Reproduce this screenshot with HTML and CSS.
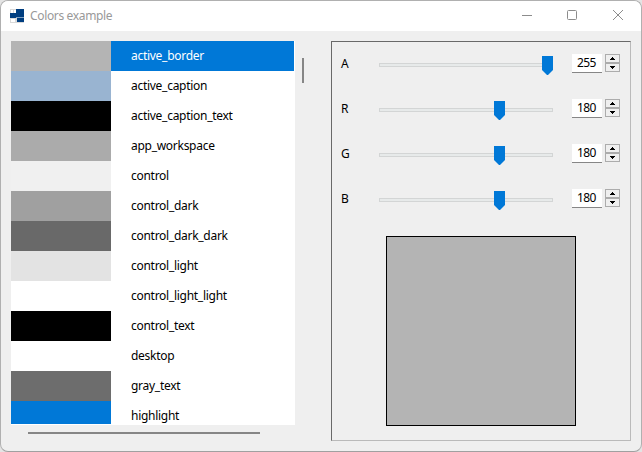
FILE: index.html
```html
<!DOCTYPE html>
<html lang="en">
<head>
<meta charset="utf-8">
<title>Colors example</title>
<link rel="stylesheet" href="styles.css">
</head>
<body>
<div class="window">
  <header class="titlebar">
    <svg class="logo" width="14" height="14" viewBox="0 0 14 14" shape-rendering="crispEdges"><path fill="#d9d9d9" d="M0 0h14v14H0z"/><path fill="#fff" d="M1 1h2v3H1zM4 1h2v3H4zM1 10h4v3H1z"/><path fill="#003e80" d="M6 0h8v8H6zM0 4h6v5H0zM7 9h7v4H7z"/><path fill="#7f9fc0" d="M6 8h8v1H6z"/></svg>
    <h1 class="title">Colors example</h1>
    <svg class="controls" width="104" height="12" viewBox="0 0 104 12" fill="none" stroke="#8c8c8c"><path d="M0 6.500h10M91 1l10 10M101 1L91 11"/><rect x="45.500" y="1.500" width="9" height="9" rx="1"/></svg>
  </header>
  <main class="content">
    <section class="list-area">
      <div class="list-row">
        <ul class="list">
          <li class="item selected"><i class="swatch active-border"></i><span>active_border</span></li>
          <li class="item"><i class="swatch active-caption"></i><span>active_caption</span></li>
          <li class="item"><i class="swatch black"></i><span>active_caption_text</span></li>
          <li class="item"><i class="swatch app-workspace"></i><span>app_workspace</span></li>
          <li class="item"><i class="swatch control"></i><span>control</span></li>
          <li class="item"><i class="swatch control-dark"></i><span>control_dark</span></li>
          <li class="item"><i class="swatch control-dark-dark"></i><span>control_dark_dark</span></li>
          <li class="item"><i class="swatch control-light"></i><span>control_light</span></li>
          <li class="item"><i class="swatch white"></i><span>control_light_light</span></li>
          <li class="item"><i class="swatch black"></i><span>control_text</span></li>
          <li class="item"><i class="swatch white"></i><span>desktop</span></li>
          <li class="item"><i class="swatch gray-text"></i><span>gray_text</span></li>
          <li class="item"><i class="swatch highlight"></i><span>highlight</span></li>
        </ul>
        <div class="vscroll"></div>
      </div>
      <div class="hscroll"></div>
    </section>
    <section class="panel">
      <div class="channel"><label>A</label><div class="slider"><div class="groove"></div><svg class="thumb full" width="11" height="19"><path d="M0 0h11v14l-5 5h-1L0 14z"/></svg></div><output>255</output><div class="spin"><b class="up"></b><b class="down"></b></div></div>
      <div class="channel"><label>R</label><div class="slider"><div class="groove"></div><svg class="thumb" width="11" height="19"><path d="M0 0h11v14l-5 5h-1L0 14z"/></svg></div><output>180</output><div class="spin"><b class="up"></b><b class="down"></b></div></div>
      <div class="channel"><label>G</label><div class="slider"><div class="groove"></div><svg class="thumb" width="11" height="19"><path d="M0 0h11v14l-5 5h-1L0 14z"/></svg></div><output>180</output><div class="spin"><b class="up"></b><b class="down"></b></div></div>
      <div class="channel"><label>B</label><div class="slider"><div class="groove"></div><svg class="thumb" width="11" height="19"><path d="M0 0h11v14l-5 5h-1L0 14z"/></svg></div><output>180</output><div class="spin"><b class="up"></b><b class="down"></b></div></div>
      <div class="preview"></div>
    </section>
  </main>
</div>
</body>
</html>
```
FILE: styles.css
```css
* { box-sizing: border-box; }
body {
  margin: 0;
  background: #e4e4e4;
  font: 12px/16px "Noto Sans", "Open Sans", sans-serif;
  color: #000;
}
.window {
  width: 642px;
  height: 452px;
  border: 1px solid #b0b0b0;
  border-bottom-color: #a0a0a0;
  border-radius: 8px;
  background: #efefef;
  overflow: hidden;
}
.titlebar {
  height: 30px;
  display: flex;
  align-items: center;
  padding: 0 15px 2px 9px;
  background: #fff;
}
.logo { margin-top: 1px; }
.title {
  margin: 0 auto 0 6px;
  padding-top: 2px;
  font: inherit;
  letter-spacing: -0.35px;
  color: #999;
}
.content {
  display: flex;
  padding: 10px;
}
.list-area { width: 320px; }
.list-row { display: flex; }
.list {
  width: 284px;
  height: 384px;
  margin: 0;
  padding: 0 1px 1px 0;
  list-style: none;
  background: #fff;
  overflow: hidden;
}
.item {
  display: flex;
  height: 30px;
  line-height: 30px;
  letter-spacing: -0.28px;
}
.item:last-child { height: 23px; overflow: hidden; }
.item span { height: 30px; padding-left: 20px; flex: 1; }
.swatch { width: 100px; }
.selected span { background: #0078d7; color: #fff; }
.active-border { background: #b4b4b4; }
.active-caption { background: #99b4d1; }
.black { background: #000; }
.app-workspace { background: #ababab; }
.control { background: #f0f0f0; }
.control-dark { background: #a0a0a0; }
.control-dark-dark { background: #696969; }
.control-light { background: #e3e3e3; }
.white { background: #fff; }
.gray-text { background: #6d6d6d; }
.highlight { background: #0078d7; }
.vscroll {
  width: 2px;
  height: 25px;
  margin: 17px 0 0 7px;
  background: #868686;
}
.hscroll {
  width: 232px;
  height: 2px;
  margin: 7px 0 0 17px;
  background: #868686;
}
.panel {
  width: 300px;
  height: 400px;
  border: 1px solid #bababa;
  border-top-color: #696969;
  border-left-color: #696969;
  padding: 11px 10px 0 9px;
}
.channel {
  display: flex;
  height: 20px;
  margin-bottom: 25px;
}
.channel label { width: 38px; line-height: 22px; }
.slider {
  position: relative;
  width: 174px;
  height: 20px;
  padding-top: 10px;
}
.groove {
  height: 4px;
  border: 1px solid #d3d5d5;
  background: #e7eaea;
}
.thumb {
  position: absolute;
  left: 115px;
  top: 3px;
  fill: #0078d7;
}
.thumb.full { left: 163px; }
.channel output {
  width: 30px;
  height: 19px;
  margin: 1px 3px 0 19px;
  padding-right: 1px;
  border-bottom: 1px solid #868686;
  background: #fff;
  text-align: center;
  line-height: 18px;
  letter-spacing: -0.6px;
}
.spin {
  width: 15px;
  height: 18px;
  margin-top: 1px;
}
.spin b {
  display: flex;
  align-items: center;
  justify-content: center;
  height: 9px;
  border: 1px solid #acacac;
  background: #efefef;
}
.spin b::before {
  content: "";
  width: 5px;
  height: 3px;
  background: #000;
}
.spin .up::before { clip-path: polygon(2px 0, 3px 0, 3px 1px, 4px 1px, 4px 2px, 5px 2px, 5px 3px, 0 3px, 0 2px, 1px 2px, 1px 1px, 2px 1px); }
.spin .down::before { clip-path: polygon(0 0, 5px 0, 5px 1px, 4px 1px, 4px 2px, 3px 2px, 3px 3px, 2px 3px, 2px 2px, 1px 2px, 1px 1px, 0 1px); }
.preview {
  width: 190px;
  height: 190px;
  margin: 28px 0 0 45px;
  border: 1px solid #000;
  background: #b4b4b4;
}
```
